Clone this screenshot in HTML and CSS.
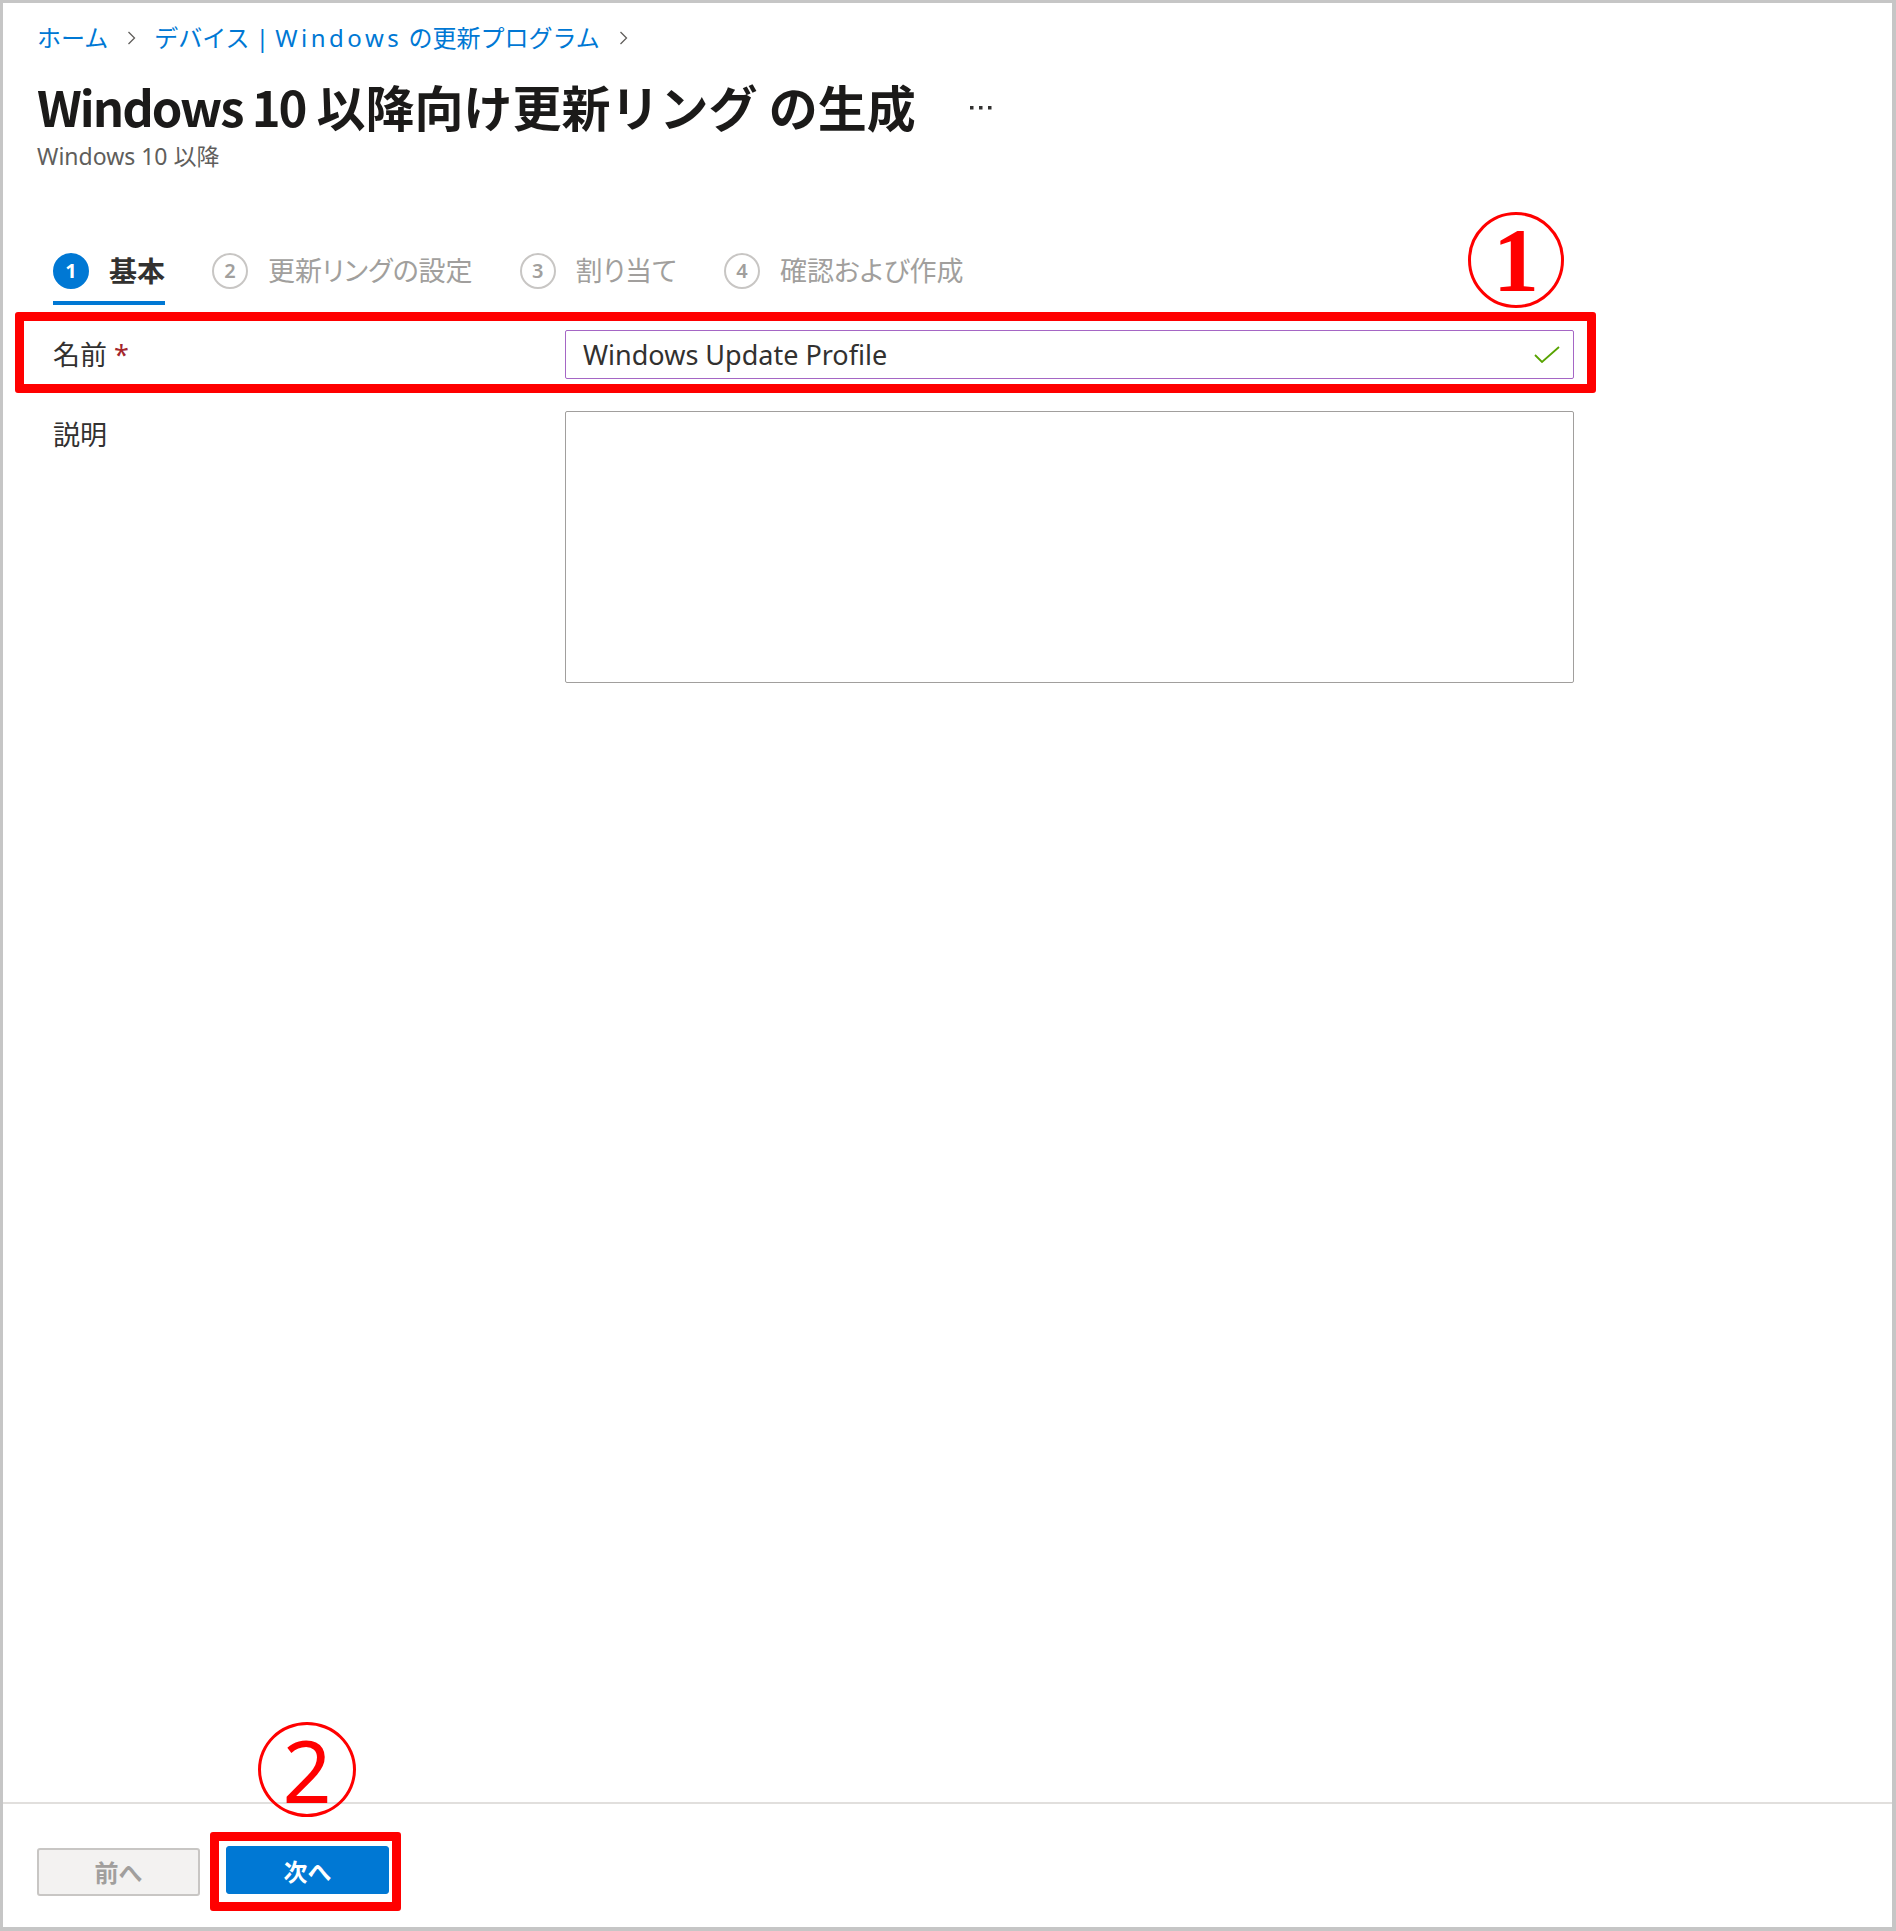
FILE: index.html
```html
<!DOCTYPE html>
<html lang="ja">
<head>
    <meta charset="UTF-8">
    <meta name="viewport" content="width=device-width, initial-scale=1.0">
    <title>Windows 10 以降向け更新リング の生成</title>
    <link rel="stylesheet" href="styles.css">
</head>
<body>
    <div class="frame">
        <!-- ブレードのヘッダー -->
        <header class="blade-header">
            <nav class="breadcrumb">
                <a href="#">ホーム</a>
                <svg class="chev" width="9" height="14" viewBox="0 0 9 14"><polyline points="1.5,1 7.5,7 1.5,13" fill="none" stroke="#605e5c" stroke-width="1.3"/></svg>
                <a href="#">デバイス | <span class="wide">Windows</span> の更新プログラム</a>
                <svg class="chev" width="9" height="14" viewBox="0 0 9 14"><polyline points="1.5,1 7.5,7 1.5,13" fill="none" stroke="#605e5c" stroke-width="1.3"/></svg>
            </nav>
            <div class="title-row">
                <h1><span class="latin">Windows 10</span> 以降向け更新リング の生成</h1>
                <svg class="more" width="22" height="4" viewBox="0 0 22 4">
                    <rect x="0" y="0" width="3.5" height="3.5" fill="#323130"/>
                    <rect x="9" y="0" width="3.5" height="3.5" fill="#323130"/>
                    <rect x="18" y="0" width="3.5" height="3.5" fill="#323130"/>
                </svg>
            </div>
            <div class="subtitle">Windows 10 以降</div>
        </header>

        <!-- ウィザード本体 -->
        <main class="wizard">
            <ul class="steps">
                <li class="step active"><span class="num">1</span><span class="step-label">基本</span></li>
                <li class="step"><span class="num">2</span><span class="step-label">更新リングの設定</span></li>
                <li class="step"><span class="num">3</span><span class="step-label">割り当て</span></li>
                <li class="step"><span class="num">4</span><span class="step-label">確認および作成</span></li>
            </ul>

            <div class="form">
                <div class="row row-name callout">
                    <label class="field-label">名前 <span class="req">*</span></label>
                    <div class="text-input">
                        <span class="value">Windows Update Profile</span>
                        <svg class="check" width="26" height="17" viewBox="0 0 26 17"><polyline points="1,9 8,16 25,1" fill="none" stroke="#57a300" stroke-width="1.8"/></svg>
                    </div>
                </div>
                <div class="row row-desc">
                    <label class="field-label">説明</label>
                    <div class="text-area"></div>
                </div>
            </div>
        </main>

        <!-- フッター -->
        <footer class="blade-footer">
            <button class="btn btn-prev">前へ</button>
            <div class="callout callout-next">
                <button class="btn btn-next">次へ</button>
            </div>
        </footer>

        <!-- 手順マーカー -->
        <div class="marker marker-1">1</div>
        <div class="marker marker-2">2</div>
    </div>
</body>
</html>
```

FILE: styles.css
```css
:root {
    --blue: #0078d4;
    --text: #323130;
    --muted: #605e5c;
    --disabled: #a19f9d;
    --callout: #ff0000;
}

* {
    box-sizing: border-box;
}

body {
    margin: 0;
    background: #ffffff;
    font-family: "Noto Sans", "Noto Sans CJK JP", sans-serif;
    color: var(--text);
}

.frame {
    position: relative;
    width: 1896px;
    height: 1931px;
    border: 3px solid #c6c6c6;
    border-right-width: 4px;
    border-bottom-width: 4px;
    display: flex;
    flex-direction: column;
}

/* ヘッダー */
.blade-header {
    padding: 18px 34px 0;
}

.breadcrumb {
    display: flex;
    align-items: center;
    font-size: 24px;
    line-height: 34px;
}

.breadcrumb a {
    color: var(--blue);
    text-decoration: none;
}

.breadcrumb .wide {
    letter-spacing: 3.5px;
}

.chev {
    margin: 0 18px 0 19px;
}

.title-row {
    display: flex;
    align-items: center;
    gap: 54px;
    margin-top: 21px;
}

.title-row h1 {
    margin: 0;
    font-family: "Noto Sans CJK JP", "Noto Sans", sans-serif;
    font-size: 49px;
    line-height: 60px;
    font-weight: 700;
    color: #1b1a19;
}

.title-row .latin {
    letter-spacing: -2px;
}

.more {
    margin-top: 4px;
}

.subtitle {
    margin-top: 5px;
    font-size: 23px;
    line-height: 30px;
    color: var(--muted);
}

/* ステップ */
.wizard {
    flex: 1;
}

.steps {
    display: flex;
    gap: 47px;
    list-style: none;
    margin: 82px 0 0;
    padding: 0 0 0 50px;
}

.step {
    display: flex;
    align-items: center;
    gap: 20px;
    padding-bottom: 12px;
    border-bottom: 4px solid transparent;
    color: var(--disabled);
    font-size: 27px;
    line-height: 36px;
    font-feature-settings: "palt";
}

.step .num {
    width: 36px;
    height: 36px;
    border: 2px solid #c8c6c4;
    border-radius: 50%;
    display: flex;
    align-items: center;
    justify-content: center;
    font-size: 20px;
    font-weight: 600;
    line-height: 1;
}

.step.active {
    border-bottom-color: var(--blue);
    color: var(--text);
    font-weight: 700;
    font-size: 28px;
}

.step.active .num {
    background: var(--blue);
    border-color: var(--blue);
    color: #ffffff;
    font-weight: 700;
}

/* フォーム */
.form {
    margin-top: 7px;
}

.row {
    display: flex;
}

.field-label {
    width: 512px;
    font-size: 27px;
    line-height: 36px;
}

.req {
    color: #a4262c;
}

.callout {
    border: 9px solid var(--callout);
    border-radius: 3px;
}

.row-name {
    width: 1581px;
    margin-left: 12px;
    padding: 9px 13px 5px 29px;
    align-items: center;
}

.text-input {
    width: 1009px;
    height: 49px;
    border: 1.5px solid #a566c5;
    border-radius: 2px;
    display: flex;
    align-items: center;
    justify-content: space-between;
    padding: 0 13px 0 17px;
    font-size: 27px;
}

.row-desc {
    margin-top: 18px;
    padding-left: 50px;
}

.row-desc .field-label {
    padding-top: 6px;
}

.text-area {
    width: 1009px;
    height: 272px;
    border: 1.5px solid #a19f9d;
    border-radius: 2px;
}

/* フッター */
.blade-footer {
    display: flex;
    align-items: center;
    gap: 10px;
    border-top: 2px solid #e1dfdd;
    padding: 28px 34px 16px;
}

.btn {
    width: 163px;
    height: 48px;
    border-radius: 3px;
    font-family: "Noto Sans CJK JP", sans-serif;
    font-size: 24px;
    font-weight: 700;
    cursor: pointer;
}

.btn-prev {
    background: #f3f2f1;
    border: 2px solid #c8c6c4;
    color: var(--disabled);
}

.btn-next {
    background: var(--blue);
    border: 1px solid var(--blue);
    color: #ffffff;
}

.callout-next {
    padding: 5px 3px 8px 7px;
}

/* 手順マーカー */
.marker {
    position: absolute;
    border: 3.5px solid var(--callout);
    border-radius: 50%;
    color: var(--callout);
    display: flex;
    align-items: center;
    justify-content: center;
}

.marker-1 {
    left: 1465px;
    top: 209px;
    width: 96px;
    height: 96px;
    font-family: "Liberation Serif", serif;
    font-weight: 700;
    font-size: 92px;
    line-height: 1;
}

.marker-2 {
    left: 255px;
    top: 1719px;
    width: 98px;
    height: 95px;
    font-family: "Noto Sans", sans-serif;
    font-size: 86px;
    line-height: 1;
}
```
